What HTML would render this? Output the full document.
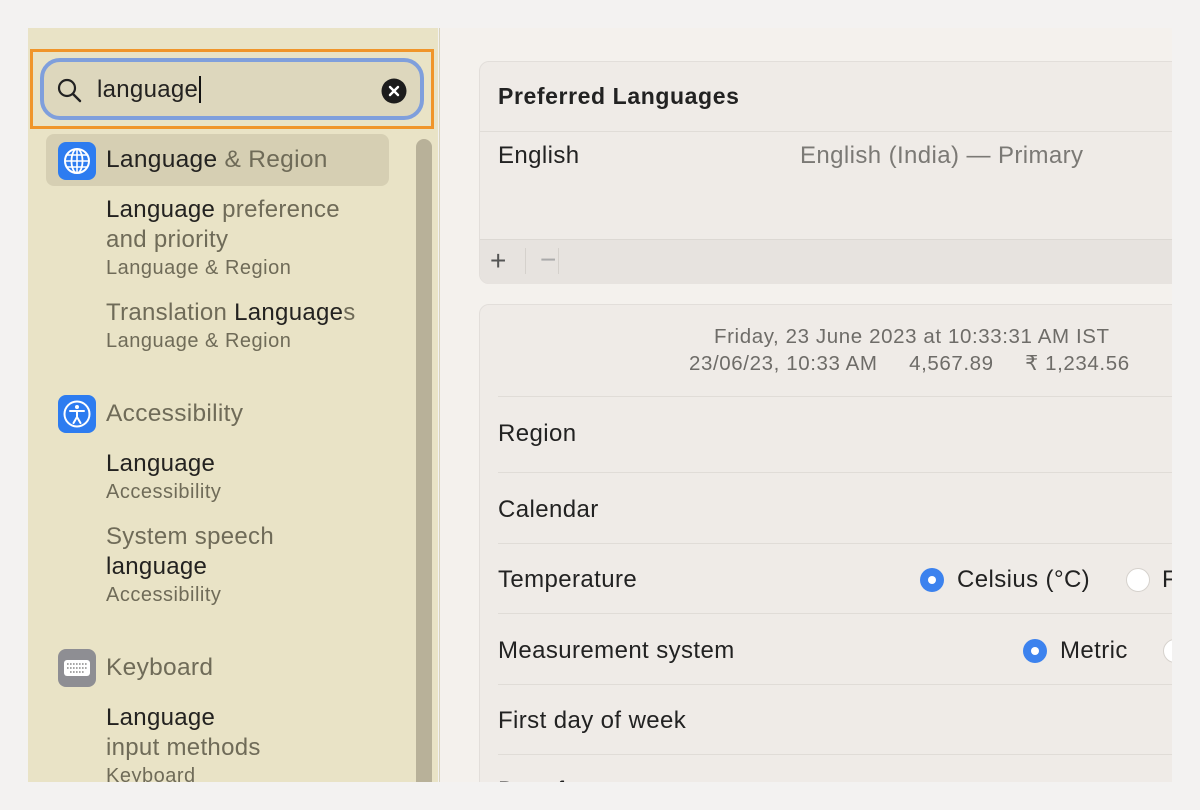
<!DOCTYPE html>
<html><head><style>
body{margin:0;width:1200px;height:810px;background:#f3f2f1;position:relative;overflow:hidden;font-family:"Liberation Sans",sans-serif}
.a{position:absolute;white-space:nowrap}
.side{position:absolute;left:28px;top:28px;width:410px;height:754px;background:#e9e3c6}
.main{position:absolute;left:439px;top:28px;width:733px;height:754px;background:#f4f1ed;overflow:hidden;border-left:1px solid #d8d2bc}
.t{font-size:24px;letter-spacing:0.3px;color:#232220}
.g{color:#6f6b58}
.s{font-size:20px;letter-spacing:0.5px;color:#6f6b58}
.card{position:absolute;left:39px;width:720px;background:#efebe7;border:1px solid #e2deda;border-radius:10px}
.row{position:absolute;left:18px;right:0;height:0;border-top:1px solid #e0dcd7}
.r{font-size:24px;letter-spacing:0.4px;color:#222}
.radio{position:absolute;width:24px;height:24px;border-radius:50%;background:#3c82ee;box-sizing:border-box}
.radio:after{content:"";position:absolute;left:8px;top:8px;width:8px;height:8px;border-radius:50%;background:#fff}
.off{position:absolute;width:24px;height:24px;border-radius:50%;background:#fff;border:1px solid #d6d2cd;box-sizing:border-box}
</style></head><body>
<div class="side">
 <div class="a" style="left:2px;top:21px;width:398px;height:74px;border:3px solid #f0952a"></div>
 <div class="a" style="left:12px;top:30px;width:376px;height:54px;border:4px solid #7f9fdc;border-radius:20px;background:#ddd7bd"></div>
 <svg class="a" style="left:28px;top:49px" width="28" height="28" viewBox="0 0 28 28"><circle cx="11" cy="11" r="8" fill="none" stroke="#222" stroke-width="2.2"/><line x1="17" y1="17" x2="24" y2="24" stroke="#222" stroke-width="2.4" stroke-linecap="round"/></svg>
 <div class="a t" style="left:69px;top:48px;font-size:24px">language<span style="border-left:2px solid #111;margin-left:1px"></span></div>
 <svg class="a" style="left:353px;top:50px" width="26" height="26"><circle cx="13" cy="13" r="12.5" fill="#1c1c1c"/><path d="M9 9L17 17M17 9L9 17" stroke="#fff" stroke-width="2.4" stroke-linecap="round"/></svg>
 <div class="a" style="left:388px;top:111px;width:16px;height:643px;background:#b8b199;border-radius:8px 8px 0 0"></div>
 <div class="a" style="left:18px;top:106px;width:343px;height:52px;background:#d6cfb3;border-radius:8px"></div>
 <svg class="a" style="left:30px;top:114px" width="38" height="38" viewBox="0 0 38 38"><rect width="38" height="38" rx="8" fill="#2d7cf0"/><circle cx="19" cy="19" r="12" fill="none" stroke="#fff" stroke-width="2"/><ellipse cx="19" cy="19" rx="5.5" ry="12" fill="none" stroke="#fff" stroke-width="1.8"/><path d="M7 19H31M9 13H29M9 25H29M19 7V31" stroke="#fff" stroke-width="1.6"/></svg>
 <div class="a t" style="left:78px;top:118px;font-size:24.5px">Language <span class="g">&amp; Region</span></div>
 <div class="a t" style="left:78px;top:168px">Language <span class="g">preference</span></div>
 <div class="a t g" style="left:78px;top:198px">and priority</div>
 <div class="a s" style="left:78px;top:229px">Language &amp; Region</div>
 <div class="a t" style="left:78px;top:271px"><span class="g">Translation</span> Language<span class="g">s</span></div>
 <div class="a s" style="left:78px;top:302px">Language &amp; Region</div>
 <svg class="a" style="left:30px;top:367px" width="38" height="38" viewBox="0 0 38 38"><rect width="38" height="38" rx="8" fill="#2d7cf0"/><circle cx="19" cy="19" r="12.5" fill="none" stroke="#fff" stroke-width="2"/><circle cx="19" cy="12" r="2" fill="#fff"/><path d="M12 16L26 16M19 16V22M19 22L15.5 28M19 22L22.5 28" stroke="#fff" stroke-width="2" stroke-linecap="round"/></svg>
 <div class="a t g" style="left:78px;top:372px;font-size:24.5px">Accessibility</div>
 <div class="a t" style="left:78px;top:422px">Language</div>
 <div class="a s" style="left:78px;top:453px">Accessibility</div>
 <div class="a t g" style="left:78px;top:495px">System speech</div>
 <div class="a t" style="left:78px;top:525px">language</div>
 <div class="a s" style="left:78px;top:556px">Accessibility</div>
 <svg class="a" style="left:30px;top:621px" width="38" height="38" viewBox="0 0 38 38"><rect width="38" height="38" rx="8" fill="#8e8e93"/><rect x="6" y="11" width="26" height="16" rx="3" fill="#fff"/><path d="M9 15H29M9 19H29M12 23H26" stroke="#888" stroke-width="1.6" stroke-dasharray="1.6 1.4"/></svg>
 <div class="a t g" style="left:78px;top:626px;font-size:24.5px">Keyboard</div>
 <div class="a t" style="left:78px;top:676px">Language</div>
 <div class="a t g" style="left:78px;top:706px">input methods</div>
 <div class="a s" style="left:78px;top:737px">Keyboard</div>
</div>
<div class="main">
 <div class="card" style="top:33px;height:221px">
  <div class="a" style="left:18px;top:21px;font-size:23px;letter-spacing:0.6px;font-weight:bold;color:#222">Preferred Languages</div>
  <div class="row" style="top:69px;left:0"></div>
  <div class="a r" style="left:18px;top:80px">English</div>
  <div class="a r" style="left:320px;top:80px;color:#7b7975">English (India) — Primary</div>
  <div class="a" style="left:0;right:0;top:177px;height:44px;background:#e7e3df;border-top:1px solid #dcd8d3;border-radius:0 0 10px 10px"></div>
  <div class="a" style="left:10px;top:183px;font-size:28px;color:#555">+</div>
  <div class="a" style="left:45px;top:186px;width:1px;height:26px;background:#d5d1cc"></div>
  <div class="a" style="left:60px;top:182px;font-size:28px;color:#aaa">−</div>
  <div class="a" style="left:78px;top:186px;width:1px;height:26px;background:#d5d1cc"></div>
 </div>
 <div class="card" style="top:276px;height:520px">
  <div class="a" style="left:234px;top:20px;font-size:20.5px;letter-spacing:0.6px;color:#6e6c68">Friday, 23 June 2023 at 10:33:31 AM IST</div>
  <div class="a" style="left:209px;top:46px;font-size:20.5px;letter-spacing:0.6px;color:#6e6c68">23/06/23, 10:33 AM &nbsp;&nbsp;&nbsp; 4,567.89 &nbsp;&nbsp;&nbsp; ₹ 1,234.56</div>
  <div class="row" style="top:91px"></div>
  <div class="a r" style="left:18px;top:115px">Region</div>
  <div class="row" style="top:167px"></div>
  <div class="a r" style="left:18px;top:191px">Calendar</div>
  <div class="row" style="top:238px"></div>
  <div class="a r" style="left:18px;top:261px">Temperature</div>
  <div class="radio" style="left:440px;top:263px"></div>
  <div class="a r" style="left:477px;top:261px">Celsius (°C)</div>
  <div class="off" style="left:646px;top:263px"></div>
  <div class="a r" style="left:682px;top:261px">F</div>
  <div class="row" style="top:308px"></div>
  <div class="a r" style="left:18px;top:332px">Measurement system</div>
  <div class="radio" style="left:543px;top:334px"></div>
  <div class="a r" style="left:580px;top:332px">Metric</div>
  <div class="off" style="left:683px;top:334px"></div>
  <div class="row" style="top:379px"></div>
  <div class="a r" style="left:18px;top:402px">First day of week</div>
  <div class="row" style="top:449px"></div>
  <div class="a r" style="left:18px;top:472px">Date format</div>
 </div>
</div>
<div class="a" style="left:0;top:782px;width:1200px;height:28px;background:#f3f2f1"></div>
<div class="a" style="left:1172px;top:0;width:28px;height:810px;background:#f3f2f1"></div>
</body></html>
